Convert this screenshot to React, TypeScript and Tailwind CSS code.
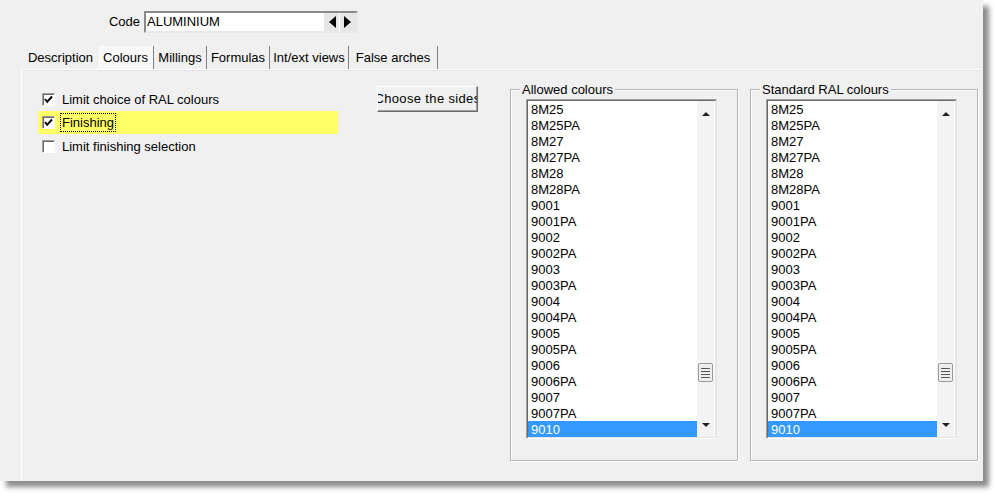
import React from "react";

const items = [
  "8M25", "8M25PA", "8M27", "8M27PA", "8M28", "8M28PA", "9001", "9001PA", "9002", "9002PA",
  "9003", "9003PA", "9004", "9004PA", "9005", "9005PA", "9006", "9006PA", "9007", "9007PA", "9010",
];

function Check({ checked }: { checked: boolean }) {
  return (
    <div className="w-[13px] h-[13px] bg-white border border-t-[#a0a0a0] border-l-[#a0a0a0] border-b-white border-r-white shadow-[inset_1px_1px_0_#696969] flex items-center justify-center">
      {checked && (
        <svg width="9" height="9" viewBox="0 0 9 9">
          <path d="M1 4 L3.2 6.8 L8 1.5" stroke="black" strokeWidth="2" fill="none" />
        </svg>
      )}
    </div>
  );
}

function ListBox() {
  return (
    <div className="ml-[15px] mt-[9px] w-[191px] h-[340px] border border-t-[#a0a0a0] border-l-[#a0a0a0] border-b-white border-r-[#e8e8e8]">
      <div className="w-full h-full border border-t-[#696969] border-l-[#696969] border-b-[#e3e3e3] border-r-[#e3e3e3] bg-white flex">
        <div className="flex-1 flex flex-col">
          {items.map((it, i) => (
            <div
              key={it}
              className={
                i === items.length - 1
                  ? "h-[16px] leading-[17px] pl-[3px] bg-[#3399ff] text-white"
                  : "h-[16px] leading-[17px] pl-[3px]"
              }
            >
              {it}
            </div>
          ))}
        </div>
        <div className="w-[18px] bg-[#f3f3f3] flex flex-col border-r border-[#fcfcfc]">
          <div className="h-[17px] flex items-end justify-center pb-[2px]">
            <svg width="8" height="5" viewBox="0 0 8 5">
              <path d="M0 5 L4 1 L8 5 Z" fill="#222" />
            </svg>
          </div>
          <div className="flex-1 flex flex-col">
            <div className="mt-[245px] h-[19px] mx-[1px] rounded-[2px] border border-[#9a9a9a] bg-[#eeeeee] flex flex-col items-center justify-center gap-[2px]">
              <div className="w-[9px] h-[1px] bg-[#555]" />
              <div className="w-[9px] h-[1px] bg-[#555]" />
              <div className="w-[9px] h-[1px] bg-[#555]" />
              <div className="w-[9px] h-[1px] bg-[#555]" />
            </div>
          </div>
          <div className="h-[17px] flex items-start justify-center pt-[3px]">
            <svg width="8" height="5" viewBox="0 0 8 5">
              <path d="M0 0 L4 4 L8 0 Z" fill="#222" />
            </svg>
          </div>
        </div>
      </div>
    </div>
  );
}

function Group({ title, className }: { title: string; className: string }) {
  return (
    <div
      className={
        "relative w-[228px] h-[372px] border border-[#b4b4b4] shadow-[1px_1px_0_white,inset_1px_1px_0_white] " +
        className
      }
    >
      <span className="absolute -top-[8px] left-[9px] px-[2px] bg-[#f0f0f0] leading-[15px]">{title}</span>
      <ListBox />
    </div>
  );
}

export default function App() {
  const tabs = [
    { t: "Description", w: 75, active: false, sep: false },
    { t: "Colours", w: 56, active: true, sep: true },
    { t: "Millings", w: 53, active: false, sep: true },
    { t: "Formulas", w: 63, active: false, sep: true },
    { t: "Int/ext views", w: 79, active: false, sep: true },
    { t: "False arches", w: 89, active: false, sep: true },
  ];
  return (
    <div className="w-[995px] h-[496px] bg-white">
      <div className="w-[983px] h-[481px] bg-[#f0f0f0] shadow-[6px_6px_5px_rgba(0,0,0,0.45)] flex flex-col font-['Liberation_Sans',Arial,sans-serif] text-[13px] text-black">
        <div className="h-[46px] pt-[11px] flex items-start">
          <div className="w-[144px] pr-[4px] text-right leading-[22px]">Code</div>
          <div className="w-[214px] h-[22px] bg-white border-2 border-t-[#8a8a8a] border-l-[#8a8a8a] border-b-[#e8e8e8] border-r-[#e8e8e8] flex items-center">
            <div className="flex-1 pl-[1px] leading-[18px]">ALUMINIUM</div>
            <div className="h-[18px] flex">
              <div className="w-[16px] h-full bg-[#e6e6e6] border-r border-white flex items-center justify-center">
                <svg width="8" height="12" viewBox="0 0 8 12">
                  <path d="M8 0 L1 6 L8 12 Z" fill="black" />
                </svg>
              </div>
              <div className="w-[16px] h-full bg-[#e6e6e6] flex items-center justify-center">
                <svg width="8" height="12" viewBox="0 0 8 12">
                  <path d="M0 0 L7 6 L0 12 Z" fill="black" />
                </svg>
              </div>
            </div>
          </div>
        </div>
        <div className="h-[23px] pl-[23px] flex items-stretch">
          {tabs.map((tb) => (
            <div
              key={tb.t}
              style={{ width: tb.w }}
              className={
                "flex items-center justify-center whitespace-nowrap leading-[17px] " +
                (tb.active ? "bg-[#f8f8f8] border-r border-[#808080]" : tb.sep ? "border-r border-[#808080]" : "")
              }
            >
              {tb.t}
            </div>
          ))}
        </div>
        <div className="flex-1 ml-[21px] mr-[3px] border-t border-l border-white shadow-[inset_0_1px_0_#e2e2e2] flex items-start pt-[16px] pl-[16px]">
          <div className="w-[300px] mt-[1px] flex flex-col">
            <div className="h-[24px] flex items-center pl-[4px] gap-[7px]">
              <Check checked />
              <span className="leading-[17px]">Limit choice of RAL colours</span>
            </div>
            <div className="h-[23px] flex items-center pl-[4px] gap-[6px] bg-[#ffff66]">
              <Check checked />
              <span className="outline-1 outline-dotted outline-black px-[1px] leading-[17px]">Finishing</span>
            </div>
            <div className="h-[24px] flex items-center pl-[4px] gap-[7px]">
              <Check checked={false} />
              <span className="leading-[17px]">Limit finishing selection</span>
            </div>
          </div>
          <div className="ml-[39px] w-[101px] h-[26px] bg-[#f0f0f0] border border-t-white border-l-white border-b-[#696969] border-r-[#696969] shadow-[inset_-1px_-1px_0_#a0a0a0] overflow-hidden flex items-center justify-center whitespace-nowrap">
            <span className="shrink-0 tracking-[0.35px]">Choose the sides</span>
          </div>
          <Group title="Allowed colours" className="ml-[32px] mt-[3px]" />
          <Group title="Standard RAL colours" className="ml-[12px] mt-[3px]" />
        </div>
      </div>
    </div>
  );
}
